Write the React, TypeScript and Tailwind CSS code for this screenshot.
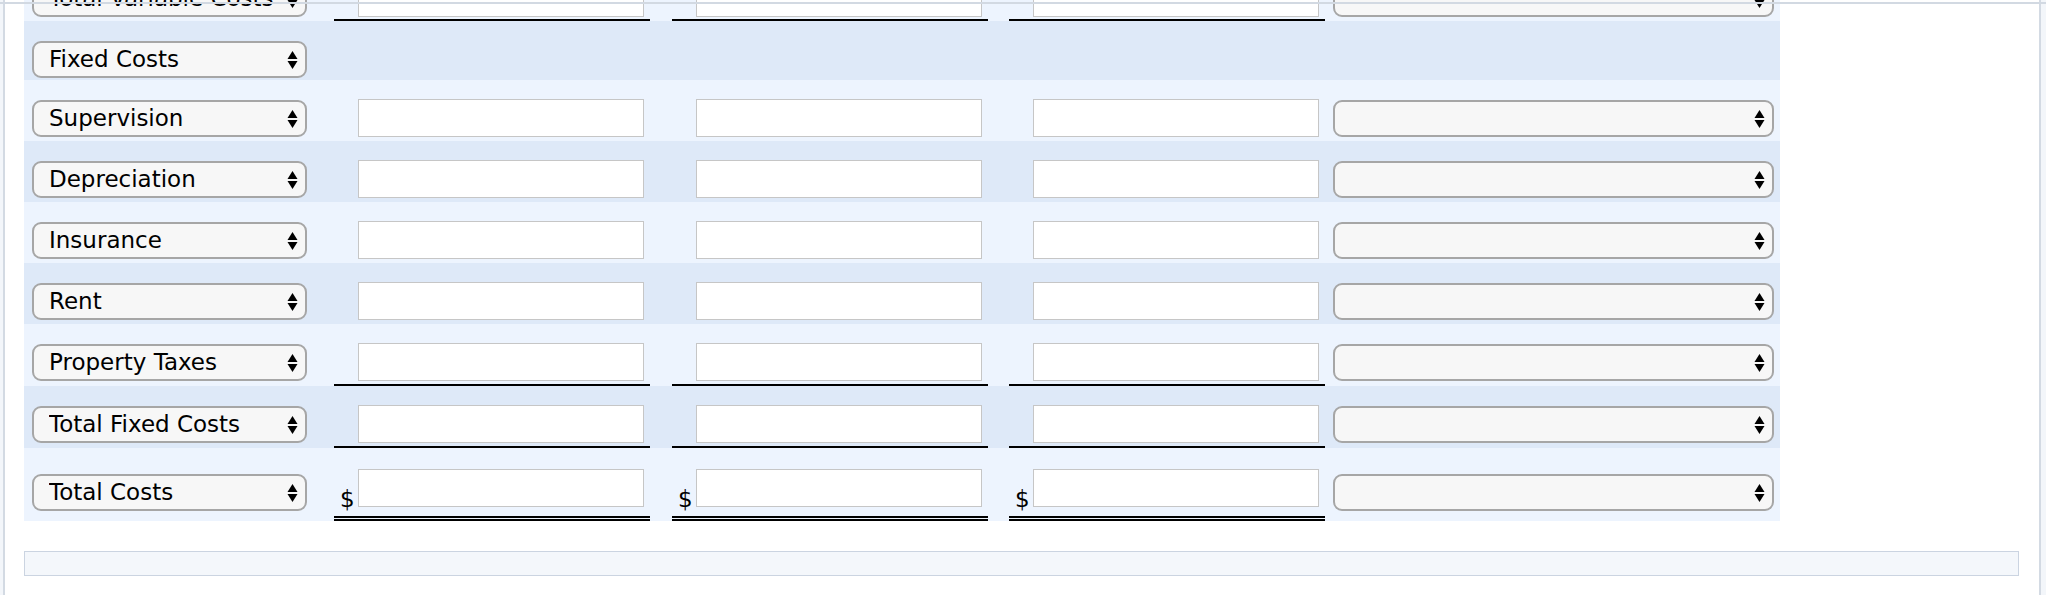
import React from 'react'

type Line = 'none' | 'single' | 'double' | 'header'

const rows: { label: string; line: Line; h: string }[] = [
  { label: 'Total Variable Costs', line: 'single', h: 'h-[61px]' },
  { label: 'Fixed Costs', line: 'header', h: 'h-[59px]' },
  { label: 'Supervision', line: 'none', h: 'h-[61px]' },
  { label: 'Depreciation', line: 'none', h: 'h-[61px]' },
  { label: 'Insurance', line: 'none', h: 'h-[61px]' },
  { label: 'Rent', line: 'none', h: 'h-[61px]' },
  { label: 'Property Taxes', line: 'single', h: 'h-[62px]' },
  { label: 'Total Fixed Costs', line: 'single', h: 'h-[62px]' },
  { label: 'Total Costs', line: 'double', h: 'h-[73px]' },
]

function Arrows() {
  return (
    <svg width="11" height="20" viewBox="0 0 11 20" className="shrink-0">
      <path d="M5.5 1 L10.5 9 L0.5 9 Z" fill="#000" />
      <path d="M0.5 11 L10.5 11 L5.5 19 Z" fill="#000" />
    </svg>
  )
}

function FakeSelect({ label, wide }: { label?: string; wide?: boolean }) {
  return (
    <div
      className={
        wide
          ? 'flex h-[37px] w-[441px] items-center justify-end rounded-[9px] border-2 border-[#a6a6a6] bg-[#f7f7f7] pr-[7px]'
          : 'flex h-[37px] w-[275px] items-center justify-between rounded-[9px] border-2 border-[#a6a6a6] bg-[#f7f7f7] pl-[15px] pr-[7px]'
      }
    >
      {label && <span className="whitespace-nowrap overflow-hidden text-[23px] leading-normal text-black">{label}</span>}
      <Arrows />
    </div>
  )
}

function Cell({ line, gap }: { line: Line; gap: string }) {
  const dbl = line === 'double'
  return (
    <div
      className={`${gap} flex h-full w-[316px] items-start ${dbl ? 'pt-[21px] border-b-[5px] border-double border-black' : 'pt-[19px]'} ${line === 'single' ? 'border-b-2 border-black' : ''}`}
    >
      <span className="w-[24px] self-end pl-[6px] text-[23px] leading-normal text-black">{dbl ? '$' : ''}</span>
      <div className="h-[38px] w-[286px] border border-[#c6c6c6] bg-white" />
    </div>
  )
}

export default function App() {
  return (
    <div className="relative h-[595px] w-[2046px] overflow-hidden bg-[#f3f6fa]" style={{ fontFamily: '"DejaVu Sans", Verdana, sans-serif' }}>
      {/* header border over the scrolled content */}
      <div className="absolute left-0 right-0 top-[2px] z-10 h-[2px] bg-[#d2d9e2]" />

      <div className="ml-[3px] flex h-full w-[2038px] flex-col border-x-2 border-[#d3dae3] bg-white pl-[19px]">
        <div className="mt-[-40px] w-[1756px]">
          {rows.map((r, i) => {
            const bg = i % 2 === 0 ? 'bg-[#edf4fe]' : 'bg-[#dee9f8]'
            const selTop = r.line === 'double' ? 'pt-[26px]' : 'pt-[20px]'
            return (
              <div key={r.label} className={`flex ${r.h} ${bg}`}>
                <div className={`w-[310px] pl-[8px] ${selTop}`}>
                  <FakeSelect label={r.label} />
                </div>
                {r.line !== 'header' && (
                  <>
                    <Cell line={r.line} gap="" />
                    <Cell line={r.line} gap="ml-[22px]" />
                    <Cell line={r.line} gap="ml-[21px]" />
                    <div className={`ml-[8px] ${selTop}`}>
                      <FakeSelect wide />
                    </div>
                  </>
                )}
              </div>
            )
          })}
        </div>

        <div className="mt-[30px] h-[25px] w-[1995px] shrink-0 border border-[#cbd4e1] bg-[#f4f7fb]" />
      </div>
    </div>
  )
}
